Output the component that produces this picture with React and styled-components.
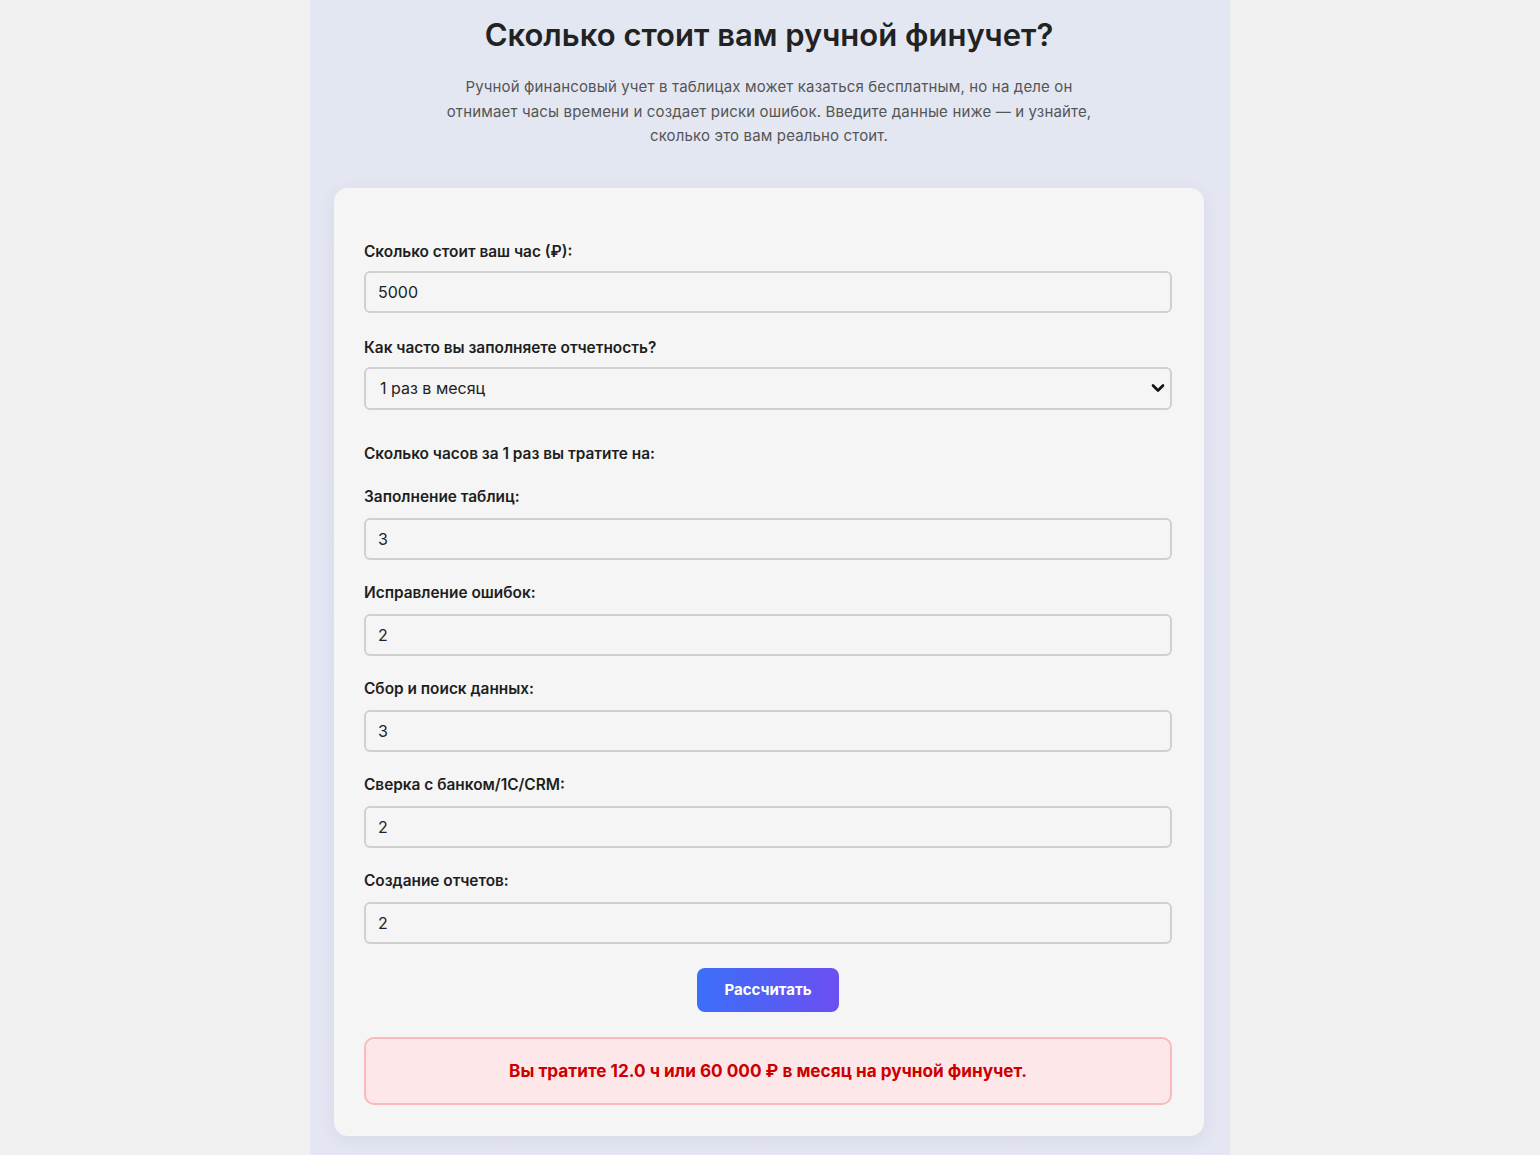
import React, { useState } from "react";
import styled, { createGlobalStyle } from "styled-components";

const Global = createGlobalStyle`
  html, body { margin: 0; padding: 0; background: #f0f0f0; }
  body { font-family: Inter, "Noto Sans", "Liberation Sans", sans-serif; color: #222; }
  * { box-sizing: border-box; }
`;

const Column = styled.main`
  width: 920px;
  margin: 0 auto;
  min-height: 1155px;
  padding: 17px 26px 40px 24px;
  background: linear-gradient(180deg, #e3e7f1 0%, #e4e6f3 100%);
`;

const Title = styled.h1`
  margin: 0;
  text-align: center;
  font-size: 31px;
  line-height: 36px;
  font-weight: 600;
  color: #222;
`;

const Lead = styled.p`
  margin: 22px auto 0;
  max-width: 662px;
  text-align: center;
  font-size: 15px;
  line-height: 24.5px;
  letter-spacing: 0.15px;
  color: #555;
`;

const Card = styled.section`
  margin-top: 39px;
  background: #f5f5f5;
  border-radius: 14px;
  padding: 55px 32px 31px 30px;
  box-shadow: 0 4px 18px rgba(60, 70, 110, 0.08);
`;

const Field = styled.div`
  display: flex;
  flex-direction: column;
  margin-bottom: ${(p) => p.$gap ?? 24}px;
`;

const Label = styled.label`
  font-size: 15.4px;
  line-height: 18px;
  font-weight: 600;
  color: #1e1e1e;
  margin-bottom: ${(p) => p.$mb ?? 12}px;
`;

const SectionNote = styled.div`
  font-size: 15.4px;
  line-height: 18px;
  font-weight: 600;
  color: #1e1e1e;
  margin-bottom: 25px;
`;

const Input = styled.input`
  width: 100%;
  height: 42px;
  border: 2px solid #d0d0d0;
  border-radius: 6px;
  background: #f5f5f5;
  padding: 0 12px;
  font-family: inherit;
  font-size: 16px;
  color: #222;
  outline: none;
`;

const SelectWrap = styled.div`
  position: relative;
`;

const Select = styled.select`
  width: 100%;
  height: 43px;
  border: 2px solid #d0d0d0;
  border-radius: 6px;
  background: #f5f5f5;
  padding: 0 14px;
  font-family: inherit;
  font-size: 16px;
  color: #222;
  appearance: none;
  -webkit-appearance: none;
  outline: none;
`;

const Chevron = styled.svg`
  position: absolute;
  right: 6px;
  top: 50%;
  transform: translateY(-50%);
  pointer-events: none;
`;

const ButtonRow = styled.div`
  display: flex;
  justify-content: center;
`;

const Button = styled.button`
  width: 142px;
  height: 44px;
  border: none;
  border-radius: 8px;
  background: linear-gradient(90deg, #3b6ff9 0%, #6b4ff1 100%);
  color: #fff;
  font-family: inherit;
  font-size: 15px;
  font-weight: 700;
  cursor: pointer;
`;

const Result = styled.div`
  margin-top: 25px;
  height: 68px;
  display: flex;
  align-items: center;
  justify-content: center;
  background: #fde7e8;
  border: 2px solid #fbb9bb;
  border-radius: 10px;
  color: #cc0000;
  font-size: 17.2px;
  font-weight: 700;
`;

const tasks = [
  { label: "Заполнение таблиц:", value: "3" },
  { label: "Исправление ошибок:", value: "2" },
  { label: "Сбор и поиск данных:", value: "3" },
  { label: "Сверка с банком/1С/CRM:", value: "2" },
  { label: "Создание отчетов:", value: "2" },
];

export default function App() {
  const [rate, setRate] = useState("5000");
  const [freq, setFreq] = useState("1");
  const [vals, setVals] = useState(tasks.map((t) => t.value));

  return (
    <>
      <Global />
      <Column>
        <Title>Сколько стоит вам ручной финучет?</Title>
        <Lead>
          Ручной финансовый учет в таблицах может казаться бесплатным, но на деле он
          отнимает часы времени и создает риски ошибок. Введите данные ниже — и узнайте,
          сколько это вам реально стоит.
        </Lead>
        <Card>
          <Field $gap={26}>
            <Label $mb={10}>Сколько стоит ваш час (₽):</Label>
            <Input value={rate} onChange={(e) => setRate(e.target.value)} />
          </Field>
          <Field $gap={35}>
            <Label $mb={10}>Как часто вы заполняете отчетность?</Label>
            <SelectWrap>
              <Select value={freq} onChange={(e) => setFreq(e.target.value)}>
                <option value="1">1 раз в месяц</option>
                <option value="2">2 раза в месяц</option>
                <option value="4">1 раз в неделю</option>
              </Select>
              <Chevron width="16" height="16" viewBox="0 0 16 16">
                <path d="M3 5.5 L8 10.5 L13 5.5" fill="none" stroke="#111" strokeWidth="2.6" strokeLinecap="round" strokeLinejoin="round" />
              </Chevron>
            </SelectWrap>
          </Field>
          <SectionNote>Сколько часов за 1 раз вы тратите на:</SectionNote>
          {tasks.map((t, i) => (
            <Field key={t.label} $gap={i === tasks.length - 1 ? 24 : 24}>
              <Label>{t.label}</Label>
              <Input
                value={vals[i]}
                onChange={(e) => {
                  const n = [...vals];
                  n[i] = e.target.value;
                  setVals(n);
                }}
              />
            </Field>
          ))}
          <ButtonRow>
            <Button>Рассчитать</Button>
          </ButtonRow>
          <Result>Вы тратите 12.0 ч или 60 000 ₽ в месяц на ручной финучет.</Result>
        </Card>
      </Column>
    </>
  );
}
